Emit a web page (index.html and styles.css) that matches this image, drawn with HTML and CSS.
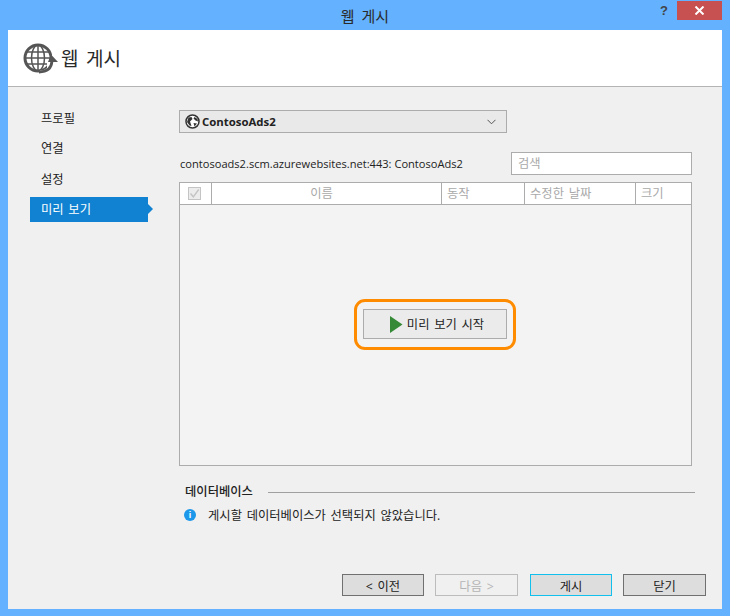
FILE: index.html
```html
<!DOCTYPE html>
<html lang="ko">
<head>
<meta charset="utf-8">
<title>웹 게시</title>
<link rel="stylesheet" href="styles.css">
</head>
<body>
<div class="window">
  <div class="titlebar">
    <div class="title">웹 게시</div>
    <div class="help">?</div>
    <div class="close"><svg width="11" height="9" viewBox="0 0 11 9"><path d="M1.5 .5L9.5 8.5M9.5 .5L1.5 8.5" stroke="#fff" stroke-width="2" fill="none"/></svg></div>
  </div>
  <div class="panel">
    <header class="head">
      <svg class="globe" width="35" height="32" viewBox="0 0 35 32">
        <g fill="none" stroke="#555">
          <circle cx="15" cy="16" r="13" stroke-width="3"/>
          <ellipse cx="15" cy="16" rx="6.5" ry="13" stroke-width="1.5"/>
          <path d="M15 3V29M2 16H28M4 10H26M4 22H26" stroke-width="1.5"/>
        </g>
        <path d="M24 31V20H26L30 11L35 20V31Z" fill="#fff"/>
        <path d="M17 31.500C24 31.500 29 28 29.500 20" fill="none" stroke="#fff" stroke-width="6"/>
        <path d="M27 13.500L34 21H24Z" fill="#555" transform="translate(1 -1)"/>
        <path d="M16 30C23 30 28.500 27 29 19" fill="none" stroke="#555" stroke-width="2.800"/>
      </svg>
      <h1 class="head-title">웹 게시</h1>
    </header>
    <div class="body">
      <nav class="nav">
        <div class="nav-item">프로필</div>
        <div class="nav-item">연결</div>
        <div class="nav-item">설정</div>
        <div class="nav-item active">미리 보기</div>
      </nav>
      <main class="main">
        <div class="combo">
          <svg class="combo-icon" width="15" height="15" viewBox="0 0 15 15">
            <circle cx="7.500" cy="7.500" r="6.500" fill="#fff" stroke="#333" stroke-width="1.500"/>
            <path d="M3.500 3.500L6.500 3L7.500 5L5 7.500L6.500 12L4.500 11.500L2 8ZM9.500 3L12.500 5L13 7.500L10.500 6.500L8.500 4.500ZM8.500 9L12 9.500L9.500 12.500Z" fill="#333"/>
          </svg>
          <span class="combo-text">ContosoAds2</span>
          <svg class="chev" width="9" height="6" viewBox="0 0 9 6"><path d="M.5 .8L4.500 4.800L8.500 .8" fill="none" stroke="#555" stroke-width="1"/></svg>
        </div>
        <div class="path-row">
          <span class="path">contosoads2.scm.azurewebsites.net:443: ContosoAds2</span>
          <div class="search">검색</div>
        </div>
        <div class="table">
          <div class="thead">
            <div class="th th-check"><span class="check"><svg width="11" height="11" viewBox="0 0 11 11"><path d="M1.500 5.500L4.300 8.800L9.700 1.500" fill="none" stroke="#c4c4c4" stroke-width="1.400"/></svg></span></div>
            <div class="th th-name">이름</div>
            <div class="th th-action">동작</div>
            <div class="th th-date">수정한 날짜</div>
            <div class="th th-size">크기</div>
          </div>
          <div class="tbody">
            <div class="ring">
              <button class="start">
                <svg width="13" height="17" viewBox="0 0 13 17"><path d="M0 0L12.500 8.500L0 17Z" fill="#368a37"/></svg>
                <span>미리 보기 시작</span>
              </button>
            </div>
          </div>
        </div>
        <section class="db">
          <div class="db-head"><span class="db-label">데이터베이스</span><span class="db-line"></span></div>
          <div class="db-info">
            <span class="info-icon">i</span>
            <span>게시할 데이터베이스가 선택되지 않았습니다.</span>
          </div>
        </section>
      </main>
    </div>
    <footer class="foot">
      <button class="btn btn-narrow">&lt; 이전</button>
      <button class="btn disabled">다음 &gt;</button>
      <button class="btn btn-narrow primary">게시</button>
      <button class="btn">닫기</button>
    </footer>
  </div>
</div>
</body>
</html>
```
FILE: styles.css
```css
* { box-sizing: border-box; }
html, body { margin: 0; padding: 0; }
body {
  font-family: "Open Sans", "Noto Sans CJK KR", sans-serif;
  font-size: 12.3px;
  word-spacing: 1.5px;
  color: #1e1e1e;
  background: #63b1ff;
}
.window {
  width: 730px;
  height: 616px;
  background: #63b1ff;
  display: flex;
  flex-direction: column;
  overflow: hidden;
}
.titlebar {
  height: 30px;
  flex: none;
  position: relative;
  display: flex;
  justify-content: center;
  align-items: center;
}
.title { font-size: 15px; color: #2a2a2a; word-spacing: 3px; }
.help {
  position: absolute;
  left: 660px;
  top: 3px;
  font: bold 13px "Liberation Sans", sans-serif;
  color: #444;
}
.close {
  position: absolute;
  left: 677px;
  top: 1px;
  width: 45px;
  height: 19px;
  background: #c75050;
  display: flex;
  align-items: center;
  justify-content: center;
}
.panel {
  margin: 0 8px 7px;
  flex: 1;
  background: #f0f0f0;
  display: flex;
  flex-direction: column;
  min-height: 0;
}
.head {
  height: 57px;
  flex: none;
  background: #fff;
  border-bottom: 1px solid #b4b4b4;
  display: flex;
  align-items: center;
  padding-left: 15px;
  gap: 3px;
}
.globe { display: block; margin-top: -1px; }
.head-title { margin: 0; padding-top: 2px; font-size: 19px; font-weight: 400; color: #2a2a2a; line-height: 26px; word-spacing: 2.5px; }
.body { display: flex; flex: 1; min-height: 0; }
.nav { width: 118px; margin-left: 22px; padding-top: 19px; flex: none; display: flex; flex-direction: column; gap: 5.33px; }
.nav-item { height: 25px; line-height: 25px; padding-left: 11px; position: relative; color: #222; }
.nav-item.active { background: #1182d1; color: #fff; }
.nav-item.active::after {
  content: "";
  position: absolute;
  left: 100%;
  top: 7px;
  border-left: 5px solid #1182d1;
  border-top: 5px solid transparent;
  border-bottom: 5px solid transparent;
}
.main { margin-left: 31px; width: 513px; padding-top: 23px; flex: none; }
.combo {
  width: 328px;
  height: 23px;
  background: #e9e9e9;
  border: 1px solid #acacac;
  display: flex;
  align-items: center;
  padding: 0 10px 0 5px;
  gap: 2px;
}
.combo-text { font-size: 11.4px; font-weight: 700; color: #222; flex: 1; }
.chev { margin-top: 1px; }
.path-row { display: flex; justify-content: space-between; align-items: center; margin-top: 19px; }
.path { font-size: 11.1px; word-spacing: 0; color: #222; margin-left: 1px; }
.search {
  width: 181px;
  height: 23px;
  background: #fff;
  border: 1px solid #acacac;
  color: #a9a9a9;
  padding-left: 6px;
  line-height: 21px;
}
.table {
  margin-top: 7px;
  height: 284px;
  border: 1px solid #acacac;
  background: #f3f3f3;
  display: flex;
  flex-direction: column;
}
.thead { height: 22px; flex: none; display: flex; background: #fff; border-bottom: 1px solid #acacac; color: #a9a9a9; }
.th { border-right: 1px solid #acacac; line-height: 21px; padding-left: 5px; }
.th-check { width: 32px; padding: 4px 0 0 8px; }
.check { display: block; width: 13px; height: 13px; border: 1px solid #c4c4c4; background: #ececec; }
.check svg { display: block; margin: 0; }
.th-name { width: 230px; text-align: center; padding: 0 10px 0 0; }
.th-action { width: 83px; }
.th-date { width: 111px; padding-left: 5px; }
.th-size { flex: 1; border-right: 0; }
.tbody { flex: 1; display: flex; justify-content: center; padding-top: 94px; padding-right: 1px; }
.ring {
  width: 162px;
  height: 51px;
  border: 3px solid #ff8c00;
  border-radius: 11px;
  padding: 7px 6px;
}
.start {
  width: 144px;
  height: 30px;
  background: #ebebeb;
  border: 1px solid #acacac;
  font: inherit;
  word-spacing: inherit;
  color: #222;
  padding: 0 0 0 4px;
  display: flex;
  align-items: center;
  justify-content: center;
  gap: 4px;
}
.db { margin-top: 16px; padding-left: 6px; width: 516px; }
.db-head { display: flex; align-items: center; gap: 15px; height: 18px; }
.db-label { font-weight: 500; color: #222; }
.db-line { flex: 1; height: 1px; background: #a0a0a0; margin-top: 2px; }
.db-info { display: flex; align-items: center; margin-top: 6px; height: 18px; color: #222; }
.info-icon {
  width: 12px;
  height: 12px;
  border-radius: 50%;
  background: #1c97ea;
  color: #fff;
  font: bold 9px/12px "Liberation Sans", sans-serif;
  text-align: center;
  margin-left: -1px;
  margin-right: 12px;
  flex: none;
}
.foot {
  height: 35px;
  flex: none;
  display: flex;
  padding-left: 334px;
  gap: 11px;
}
.btn {
  width: 83px;
  height: 22px;
  background: #dddddd;
  border: 1px solid #707070;
  font: inherit;
  word-spacing: inherit;
  color: #222;
  padding: 1px 0 0;
}
.btn-narrow { width: 82px; }
.btn.disabled { background: #f0f0f0; border-color: #bcbcbc; color: #b4b4b4; margin-right: 1px; }
.btn.primary { border-color: #12c0ee; }
```
